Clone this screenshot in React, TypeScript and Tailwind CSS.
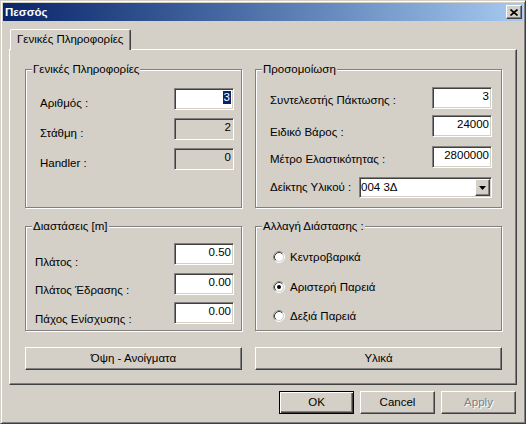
import React from "react";

const raised =
  "border border-t-white border-l-white border-r-[#404040] border-b-[#404040] shadow-[inset_-1px_-1px_#808080]";
const sunken =
  "border border-t-[#808080] border-l-[#808080] border-r-white border-b-white shadow-[inset_1px_1px_#404040,inset_-1px_-1px_#d4d0c8]";

function Group({
  label,
  className,
  children,
}: {
  label: string;
  className: string;
  children?: React.ReactNode;
}) {
  return (
    <div
      className={`relative border border-[#808080] shadow-[inset_1px_1px_#fff,1px_1px_#fff] ${className}`}
    >
      <span className="absolute left-[6px] top-[-7px] bg-[#d4d0c8] px-[1px] leading-[13px] whitespace-nowrap">
        {label}
      </span>
      {children}
    </div>
  );
}

function Field({
  value,
  disabled,
  selected,
}: {
  value: string;
  disabled?: boolean;
  selected?: boolean;
}) {
  return (
    <div
      className={`h-[22px] w-[60px] shrink-0 ${sunken} ${
        disabled ? "bg-[#d4d0c8]" : "bg-white"
      } text-right pr-[2px] pt-[2px] leading-[13px]`}
    >
      {selected ? (
        <span className="inline-block bg-[#0a246a] text-white px-[1px]">{value}</span>
      ) : (
        value
      )}
    </div>
  );
}

function Row({
  label,
  pt,
  children,
  mt,
}: {
  label: string;
  pt: string;
  mt: string;
  children: React.ReactNode;
}) {
  return (
    <div className={`flex justify-between items-start h-[22px] ${mt}`}>
      <span className={`${pt} whitespace-nowrap`}>{label}</span>
      {children}
    </div>
  );
}

function Radio({ label, checked, mt }: { label: string; checked?: boolean; mt: string }) {
  return (
    <div className={`flex items-center h-[12px] ${mt}`}>
      <svg width="12" height="12" viewBox="0 0 12 12" className="shrink-0">
        <circle cx="6" cy="6" r="5.5" fill="none" stroke="#ffffff" />
        <path d="M2.11 9.89A5.5 5.5 0 0 1 9.89 2.11" fill="none" stroke="#808080" />
        <circle cx="6" cy="6" r="4.5" fill="#ffffff" stroke="#d4d0c8" />
        <path d="M2.82 9.18A4.5 4.5 0 0 1 9.18 2.82" fill="none" stroke="#404040" />
        {checked && <circle cx="6" cy="6" r="2" fill="#000" />}
      </svg>
      <span className="ml-[5px] whitespace-nowrap leading-[13px]">{label}</span>
    </div>
  );
}

export default function App() {
  return (
    <div className="w-[526px] h-[424px] bg-[#d4d0c8] font-['Liberation_Sans',Arial,sans-serif] text-[11.5px] text-black leading-[13px] border border-t-[#d4d0c8] border-l-[#d4d0c8] border-r-[#404040] border-b-[#404040] shadow-[inset_1px_1px_#fff,inset_-1px_-1px_#808080] p-[2px] flex flex-col overflow-hidden select-none">
      {/* Title bar */}
      <div className="h-[18px] shrink-0 flex items-center justify-between bg-linear-to-r from-[#0a246a] to-[#a6caf0] pl-[2px] pr-[1px]">
        <span className="text-white font-bold text-[11.5px]">Πεσσός</span>
        <div
          className={`w-[16px] h-[14px] bg-[#d4d0c8] flex items-center justify-center ${raised}`}
        >
          <svg width="8" height="7" viewBox="0 0 8 7">
            <path d="M0.5 0.5L7.5 6.5M7.5 0.5L0.5 6.5" stroke="#000" strokeWidth="1.6" />
          </svg>
        </div>
      </div>

      {/* Tabs */}
      <div className="mt-[8px] ml-[6px] w-[508px] flex flex-col">
        <div className="relative z-10 ml-[1px] -mb-[1px] w-[121px] h-[21px] bg-[#d4d0c8] border-t border-l border-r border-t-white border-l-white border-r-[#404040] rounded-t-[2px] shadow-[inset_-1px_0_#808080] pl-[6px] pt-[3px] whitespace-nowrap">
          Γενικές Πληροφορίες
        </div>
        <div className="h-[336px] border border-t-white border-l-white border-r-[#404040] border-b-[#404040] shadow-[inset_-1px_-1px_#808080] pl-[15px] pt-[19px] flex flex-col">
          <div className="flex gap-[13px]">
            <Group
              label="Γενικές Πληροφορίες"
              className="w-[217px] h-[139px] pl-[14px] pr-[7px] pt-[18px]"
            >
              <Row label="Αριθμός :" pt="pt-[9px]" mt="">
                <Field value="3" selected />
              </Row>
              <Row label="Στάθμη :" pt="pt-[9px]" mt="mt-[8px]">
                <Field value="2" disabled />
              </Row>
              <Row label="Handler :" pt="pt-[9px]" mt="mt-[8px]">
                <Field value="0" disabled />
              </Row>
            </Group>
            <Group
              label="Προσομοίωση"
              className="w-[247px] h-[139px] pl-[14px] pr-[9px] pt-[17px]"
            >
              <Row label="Συντελεστής Πάκτωσης :" pt="pt-[7px]" mt="">
                <Field value="3" />
              </Row>
              <Row label="Ειδικό Βάρος :" pt="pt-[11px]" mt="mt-[6px]">
                <Field value="24000" />
              </Row>
              <Row label="Μέτρο Ελαστικότητας :" pt="pt-[7px]" mt="mt-[9px]">
                <Field value="2800000" />
              </Row>
              <Row label="Δείκτης Υλικού :" pt="pt-[4px]" mt="mt-[9px]">
                <div
                  className={`w-[133px] h-[21px] bg-white ${sunken} flex items-center justify-between pl-[1px] pr-[1px]`}
                >
                  <span>004 3Δ</span>
                  <div
                    className={`w-[15px] h-[17px] bg-[#d4d0c8] ${raised} flex items-center justify-center`}
                  >
                    <svg width="7" height="4" viewBox="0 0 7 4">
                      <path d="M0 0H7L3.5 4Z" fill="#000" />
                    </svg>
                  </div>
                </div>
              </Row>
            </Group>
          </div>

          <div className="flex gap-[13px] mt-[18px]">
            <Group
              label="Διαστάσεις [m]"
              className="w-[217px] h-[105px] pl-[9px] pr-[7px] pt-[16px]"
            >
              <Row label="Πλάτος :" pt="pt-[13px]" mt="">
                <Field value="0.50" />
              </Row>
              <Row label="Πλάτος Έδρασης :" pt="pt-[11px]" mt="mt-[8px]">
                <Field value="0.00" />
              </Row>
              <Row label="Πάχος Ενίσχυσης :" pt="pt-[11px]" mt="mt-[7px]">
                <Field value="0.00" />
              </Row>
            </Group>
            <Group
              label="Αλλαγή Διάστασης :"
              className="w-[247px] h-[105px] pl-[17px] pt-[24px]"
            >
              <Radio label="Κεντροβαρικά" mt="" />
              <Radio label="Αριστερή Παρειά" checked mt="mt-[18px]" />
              <Radio label="Δεξιά Παρειά" mt="mt-[17px]" />
            </Group>
          </div>

          <div className="flex gap-[13px] mt-[16px]">
            <div
              className={`w-[217px] h-[23px] ${raised} flex items-center justify-center`}
            >
              Όψη - Ανοίγματα
            </div>
            <div
              className={`w-[247px] h-[23px] ${raised} flex items-center justify-center`}
            >
              Υλικά
            </div>
          </div>
        </div>
      </div>

      {/* Bottom buttons */}
      <div className="flex justify-end gap-[6px] mt-[6px] pr-[7px]">
        <div className="w-[75px] h-[23px] border border-black shadow-[inset_1px_1px_#fff,inset_-1px_-1px_#404040,inset_-2px_-2px_#808080] flex items-center justify-center">
          OK
        </div>
        <div
          className={`w-[75px] h-[23px] ${raised} flex items-center justify-center`}
        >
          Cancel
        </div>
        <div
          className={`w-[75px] h-[23px] ${raised} flex items-center justify-center text-[#808080] [text-shadow:1px_1px_0_#fff]`}
        >
          Apply
        </div>
      </div>
    </div>
  );
}
